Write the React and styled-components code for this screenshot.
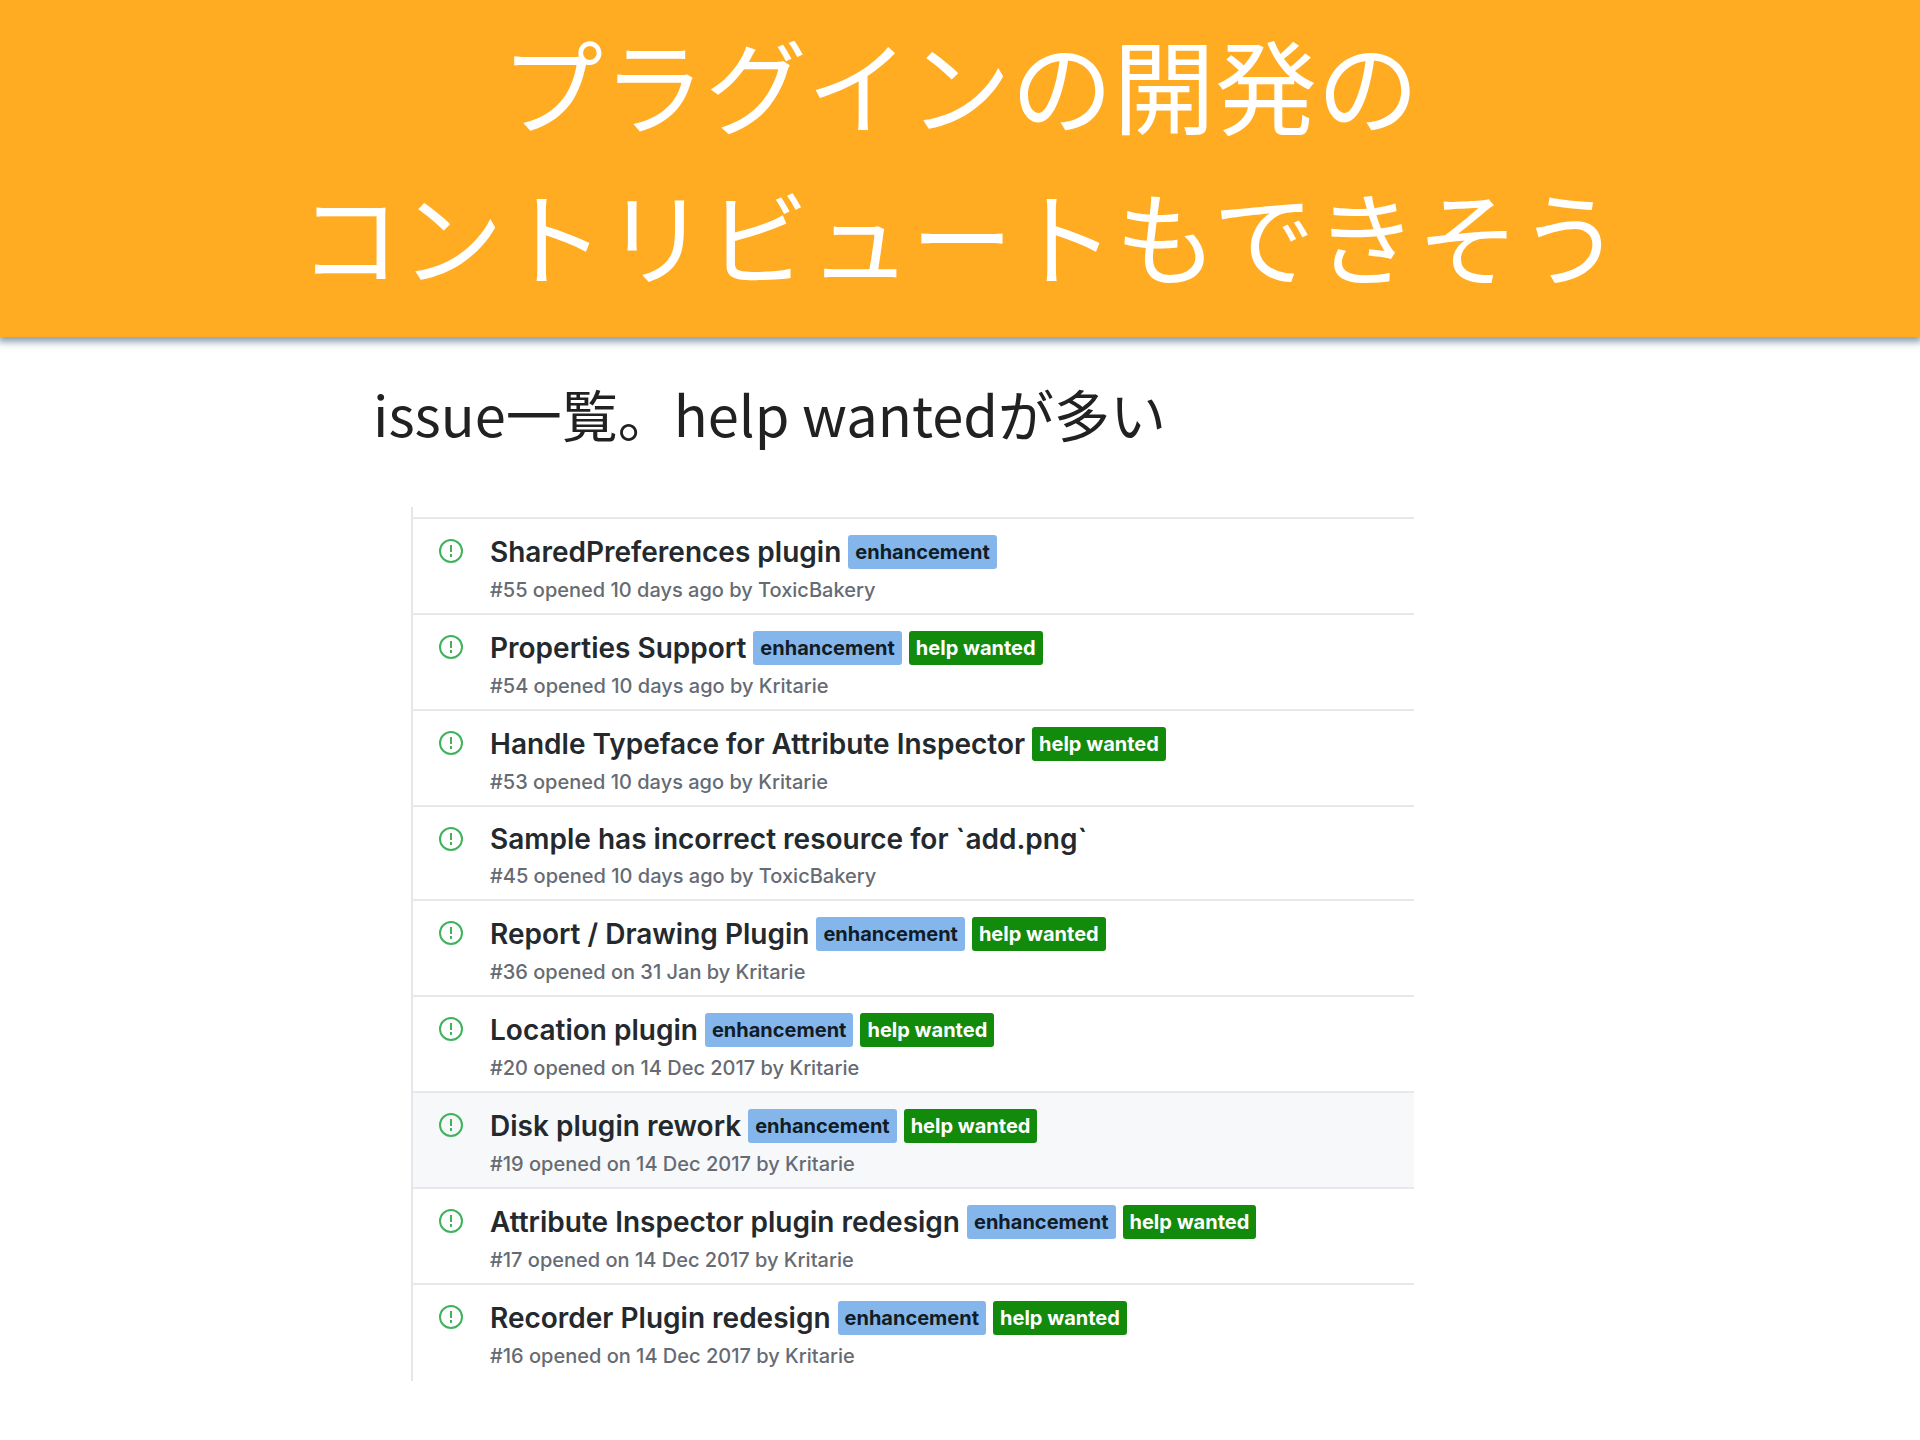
import styled, { createGlobalStyle } from "styled-components";

const GlobalStyle = createGlobalStyle`
  * {
    box-sizing: border-box;
  }

  body {
    margin: 0;
    background: #fff;
    font-family: 'Noto Sans CJK JP', sans-serif;
  }
`;

/* =========================
      HEADER
========================= */
const Header = styled.header`
  padding: 7px 24px 28px;
  background: #ffac22;
  box-shadow: 0 3px 7px 2px rgba(50, 80, 105, 0.55);
`;

const SlideTitle = styled.h1`
  margin: 0;
  color: #fff;
  font-size: 102px;
  font-weight: 400;
  line-height: 151px;
  text-align: center;
`;

/* =========================
      CONTENT
========================= */
const Content = styled.main`
  max-width: 1174px;
  margin: 0 auto;
  padding: 34px 0 60px;
`;

const Lead = styled.p`
  margin: 0;
  color: #212121;
  font-size: 56px;
  line-height: 84px;
`;

/* =========================
      ISSUE LIST
========================= */
const IssueList = styled.ul`
  max-width: 1003px;
  margin: 52px 0 0 38px;
  padding: 10px 0 2px;
  border-left: 2px solid #e4e6ea;
  list-style: none;
  font-family: Inter, sans-serif;
`;

const IssueRow = styled.li`
  display: flex;
  gap: 27px;
  padding: 16px 24px 10px 26px;
  border-top: 2px solid #e6e8eb;
  background: ${(p) => (p.$active ? "#f6f8fa" : "transparent")};
`;

const OpenIcon = styled.svg`
  flex: none;
  width: 24px;
  height: 24px;
  margin-top: 4px;
  fill: none;
  stroke: #3fb35c;
  stroke-width: 2;
`;

const IssueBody = styled.div`
  min-width: 0;
`;

const IssueHeading = styled.div`
  display: flex;
  flex-wrap: wrap;
  align-items: center;
  gap: 7px;
`;

const IssueTitle = styled.a`
  color: #24292e;
  font-size: 28px;
  font-weight: 600;
  line-height: 32px;
  text-decoration: none;
`;

const Label = styled.span`
  padding: 0 7px;
  border-radius: 3px;
  background: ${(p) => (p.$kind === "help wanted" ? "#128a0c" : "#84b6eb")};
  color: ${(p) => (p.$kind === "help wanted" ? "#fff" : "#111c26")};
  font-size: 20px;
  font-weight: 700;
  line-height: 34px;
`;

const IssueMeta = styled.p`
  margin: 9px 0 0;
  color: #666b73;
  font-size: 20px;
  font-weight: 500;
  line-height: 25px;
`;

const issues = [
  { id: 55, title: "SharedPreferences plugin", labels: ["enhancement"], opened: "10 days ago", author: "ToxicBakery" },
  { id: 54, title: "Properties Support", labels: ["enhancement", "help wanted"], opened: "10 days ago", author: "Kritarie" },
  { id: 53, title: "Handle Typeface for Attribute Inspector", labels: ["help wanted"], opened: "10 days ago", author: "Kritarie" },
  { id: 45, title: "Sample has incorrect resource for `add.png`", labels: [], opened: "10 days ago", author: "ToxicBakery" },
  { id: 36, title: "Report / Drawing Plugin", labels: ["enhancement", "help wanted"], opened: "on 31 Jan", author: "Kritarie" },
  { id: 20, title: "Location plugin", labels: ["enhancement", "help wanted"], opened: "on 14 Dec 2017", author: "Kritarie" },
  { id: 19, title: "Disk plugin rework", labels: ["enhancement", "help wanted"], opened: "on 14 Dec 2017", author: "Kritarie", active: true },
  { id: 17, title: "Attribute Inspector plugin redesign", labels: ["enhancement", "help wanted"], opened: "on 14 Dec 2017", author: "Kritarie" },
  { id: 16, title: "Recorder Plugin redesign", labels: ["enhancement", "help wanted"], opened: "on 14 Dec 2017", author: "Kritarie" },
];

function Issue({ issue }) {
  return (
    <IssueRow $active={issue.active}>
      <OpenIcon viewBox="0 0 24 24" aria-hidden="true">
        <circle cx="12" cy="12" r="11" />
        <path d="M12 6v7M12 15v3" />
      </OpenIcon>
      <IssueBody>
        <IssueHeading>
          <IssueTitle href={`#${issue.id}`}>{issue.title}</IssueTitle>
          {issue.labels.map((name) => (
            <Label key={name} $kind={name}>{name}</Label>
          ))}
        </IssueHeading>
        <IssueMeta>{`#${issue.id} opened ${issue.opened} by ${issue.author}`}</IssueMeta>
      </IssueBody>
    </IssueRow>
  );
}

export default function App() {
  return (
    <>
      <GlobalStyle />
      <Header lang="ja">
        <SlideTitle>
          プラグインの開発の
          <br />
          コントリビュートもできそう
        </SlideTitle>
      </Header>
      <Content lang="ja">
        <Lead>issue一覧。help wantedが多い</Lead>
        <IssueList>
          {issues.map((issue) => (
            <Issue key={issue.id} issue={issue} />
          ))}
        </IssueList>
      </Content>
    </>
  );
}
